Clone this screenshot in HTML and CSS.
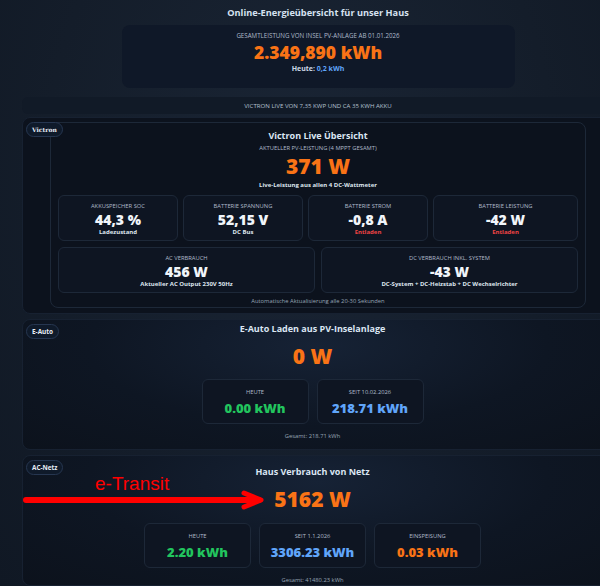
FILE: index.html
```html
<!DOCTYPE html>
<html lang="de">
  <head>
    <meta charset="UTF-8" />
    <meta name="viewport" content="width=device-width, initial-scale=1.0" />
    <title>Online-Energieübersicht</title>
    <link rel="stylesheet" href="styles.css">
  </head>
  <body>
    <div class="page">
      <h1 class="page-title">Online-Energieübersicht für unser Haus</h1>

      <section class="total">
        <div class="label">GESAMTLEISTUNG VON INSEL PV-ANLAGE AB 01.01.2026</div>
        <div class="total-value">2.349,890 kWh</div>
        <div class="total-today">Heute: <span class="blue">0,2 kWh</span></div>
      </section>

      <div class="strip">VICTRON LIVE VON 7,35 KWP UND CA 35 KWH AKKU</div>

      <!-- Victron -->
      <section class="block block-victron">
        <span class="badge badge-serif">Victron</span>
        <div class="inner">
          <h2 class="block-title">Victron Live Übersicht</h2>
          <div class="label">AKTUELLER PV-LEISTUNG (4 MPPT GESAMT)</div>
          <div class="big orange">371 W</div>
          <div class="sub">Live-Leistung aus allen 4 DC-Wattmeter</div>

          <div class="grid4">
            <div class="card">
              <div class="label">AKKUSPEICHER SOC</div>
              <div class="value">44,3 %</div>
              <div class="sub">Ladezustand</div>
            </div>
            <div class="card">
              <div class="label">BATTERIE SPANNUNG</div>
              <div class="value">52,15 V</div>
              <div class="sub">DC Bus</div>
            </div>
            <div class="card">
              <div class="label">BATTERIE STROM</div>
              <div class="value red">-0,8 A</div>
              <div class="sub red">Entladen</div>
            </div>
            <div class="card">
              <div class="label">BATTERIE LEISTUNG</div>
              <div class="value red">-42 W</div>
              <div class="sub red">Entladen</div>
            </div>
          </div>

          <div class="grid2">
            <div class="card">
              <div class="label">AC VERBRAUCH</div>
              <div class="value">456 W</div>
              <div class="sub">Aktueller AC Output 230V 50Hz</div>
            </div>
            <div class="card">
              <div class="label">DC VERBRAUCH INKL. SYSTEM</div>
              <div class="value">-43 W</div>
              <div class="sub">DC-System + DC-Heizstab + DC Wechselrichter</div>
            </div>
          </div>

          <div class="note">Automatische Aktualisierung alle 20-30 Sekunden</div>
        </div>
      </section>

      <!-- E-Auto -->
      <section class="block block-glow block-auto">
        <span class="badge">E-Auto</span>
        <h2 class="block-title">E-Auto Laden aus PV-Inselanlage</h2>
        <div class="big orange">0 W</div>
        <div class="stats">
          <div class="stat">
            <div class="label">HEUTE</div>
            <div class="stat-value green">0.00 kWh</div>
          </div>
          <div class="stat">
            <div class="label">SEIT 10.02.2026</div>
            <div class="stat-value blue">218.71 kWh</div>
          </div>
        </div>
        <div class="note">Gesamt: 218.71 kWh</div>
      </section>

      <!-- AC-Netz -->
      <section class="block block-glow block-netz">
        <span class="badge">AC-Netz</span>
        <h2 class="block-title">Haus Verbrauch von Netz</h2>
        <div class="big orange">5162 W</div>
        <div class="stats">
          <div class="stat">
            <div class="label">HEUTE</div>
            <div class="stat-value green">2.20 kWh</div>
          </div>
          <div class="stat">
            <div class="label">SEIT 1.1.2026</div>
            <div class="stat-value blue">3306.23 kWh</div>
          </div>
          <div class="stat">
            <div class="label">EINSPEISUNG</div>
            <div class="stat-value orange">0.03 kWh</div>
          </div>
        </div>
        <div class="note">Gesamt: 41480.23 kWh</div>

        <!-- annotation drawn over the screenshot -->
        <div class="callout">
          <span class="callout-text">e-Transit</span>
          <svg class="callout-arrow" width="242" height="20" viewBox="0 0 242 20">
            <path d="M3 10 H236" stroke="#f00" stroke-width="6" stroke-linecap="round" fill="none"/>
            <path d="M221 3 L238 10 L221 17" stroke="#f00" stroke-width="5" stroke-linecap="round" stroke-linejoin="round" fill="none"/>
          </svg>
        </div>
      </section>
    </div>
  </body>
</html>
```

FILE: styles.css
```css
:root {
  --bg: #172130;
  --panel: #0c121d;
  --card: #0e1522;
  --line: #1d2838;
  --text: #e4ebf5;
  --muted: #aebaca;
  --orange: #f97316;
  --green: #22c55e;
  --blue: #60a5fa;
  --red: #ef4444;
}
* {
  box-sizing: border-box;
}
html,
body {
  overflow: hidden;
}
body {
  margin: 0;
  font-family: "Open Sans", "Noto Sans", sans-serif;
  background: radial-gradient(ellipse at 50% 30%, #1a2535 0%, #141d2a 60%, #101824 100%);
  color: var(--text);
  min-height: 586px;
}
.page {
  width: 592px;
  margin-left: 22px;
  padding-top: 7px;
}
.page-title {
  margin: 0;
  font-size: 9.2px;
  line-height: 12px;
  font-weight: 700;
  text-align: center;
  color: #d6e2f1;
}

.label {
  font-size: 5.8px;
  line-height: 8px;
  color: var(--muted);
  text-transform: uppercase;
}
.sub {
  font-size: 6px;
  line-height: 8px;
  font-weight: 700;
  color: #dfe6ef;
}
.orange { color: var(--orange); }
.green { color: var(--green); }
.blue { color: var(--blue); }
.red { color: var(--red); }

/* top total */
.total {
  width: 393px;
  margin: 6px auto 0;
  height: 63px;
  padding-top: 7px;
  background: #0f1828;
  border-radius: 8px;
  text-align: center;
}
.total .label {
  font-size: 6.2px;
}
.total-value {
  font-size: 17.5px;
  line-height: 24px;
  font-weight: 800;
  color: var(--orange);
}
.total-today {
  font-size: 7px;
  line-height: 10px;
  font-weight: 700;
  color: #cdd8e6;
}

.strip {
  margin-top: 9px;
  height: 17px;
  line-height: 18px;
  background: #111a27;
  border-radius: 6px;
  font-size: 6.1px;
  color: #b4c0d0;
  text-align: center;
}

/* sections */
.block {
  position: relative;
  margin-top: 3px;
  background: var(--panel);
  border: 1px solid #172131;
  border-radius: 8px;
  text-align: center;
}
.block-victron {
  padding: 4px 27px 5px 27px;
}
.block-glow {
  margin-top: 5px;
  padding-right: 11px;
  background: radial-gradient(ellipse at 50% 20%, #162235 0%, #0e1623 55%, #0c121c 100%);
}
.block-auto {
  height: 131px;
  padding-top: 3px;
}
.block-netz {
  height: 131px;
  padding-top: 10px;
}
.badge {
  position: absolute;
  left: 3px;
  top: 4px;
  padding: 0 5px;
  height: 15px;
  line-height: 14px;
  font-size: 6.4px;
  font-weight: 700;
  color: #e8eef7;
  background: #0f1a2a;
  border: 1px solid #263650;
  border-radius: 8px;
}
.badge-serif {
  font-family: "DejaVu Serif", "Liberation Serif", serif;
  font-size: 6px;
}
.inner {
  border: 1px solid var(--line);
  border-radius: 8px;
  padding: 7px 7px 2px 7px;
}
.block-title {
  margin: 0;
  font-size: 9px;
  line-height: 12px;
  font-weight: 700;
  color: #dbe6f3;
}
.inner .block-title + .label {
  margin-top: 2px;
}
.big {
  font-size: 21px;
  line-height: 24px;
  font-weight: 800;
  margin-top: 3px;
}
.inner .big {
  line-height: 29px;
  margin-top: 0;
}
.inner .big + .sub {
  line-height: 9px;
}
.block-glow .big {
  margin-top: 9px;
}

.grid4 {
  display: grid;
  grid-template-columns: 120px 120px 120px 1fr;
  gap: 5px;
  margin-top: 5px;
}
.grid2 {
  display: grid;
  grid-template-columns: 1fr 1fr;
  gap: 6px;
  margin-top: 6px;
}
.card {
  height: 46px;
  padding-top: 6px;
  background: var(--card);
  border: 1px solid var(--line);
  border-radius: 6px;
}
.value {
  font-size: 14px;
  line-height: 16px;
  font-weight: 800;
  color: #f1f5fa;
  margin-top: 2px;
}
.note {
  font-size: 5.8px;
  line-height: 8px;
  color: #98a5b6;
}
.inner .note {
  margin-top: 4px;
}

.stats {
  display: flex;
  justify-content: center;
  gap: 8px;
  margin-top: 11px;
}
.stat {
  width: 107px;
  height: 45px;
  padding-top: 8px;
  background: var(--card);
  border: 1px solid var(--line);
  border-radius: 6px;
}
.stat-value {
  font-size: 13px;
  line-height: 18px;
  font-weight: 800;
  margin-top: 3px;
}
.block-glow .note {
  margin-top: 8px;
}
.block-netz .stats {
  margin-top: 12px;
}

.callout {
  position: absolute;
  left: 0;
  top: 17px;
  width: 250px;
  height: 40px;
  text-align: left;
}
.callout-text {
  position: absolute;
  left: 72px;
  top: 0;
  font-family: "Liberation Sans", Arial, sans-serif;
  font-size: 19px;
  line-height: 22px;
  color: #f00;
}
.callout-arrow {
  position: absolute;
  left: 0;
  top: 17px;
}
```
